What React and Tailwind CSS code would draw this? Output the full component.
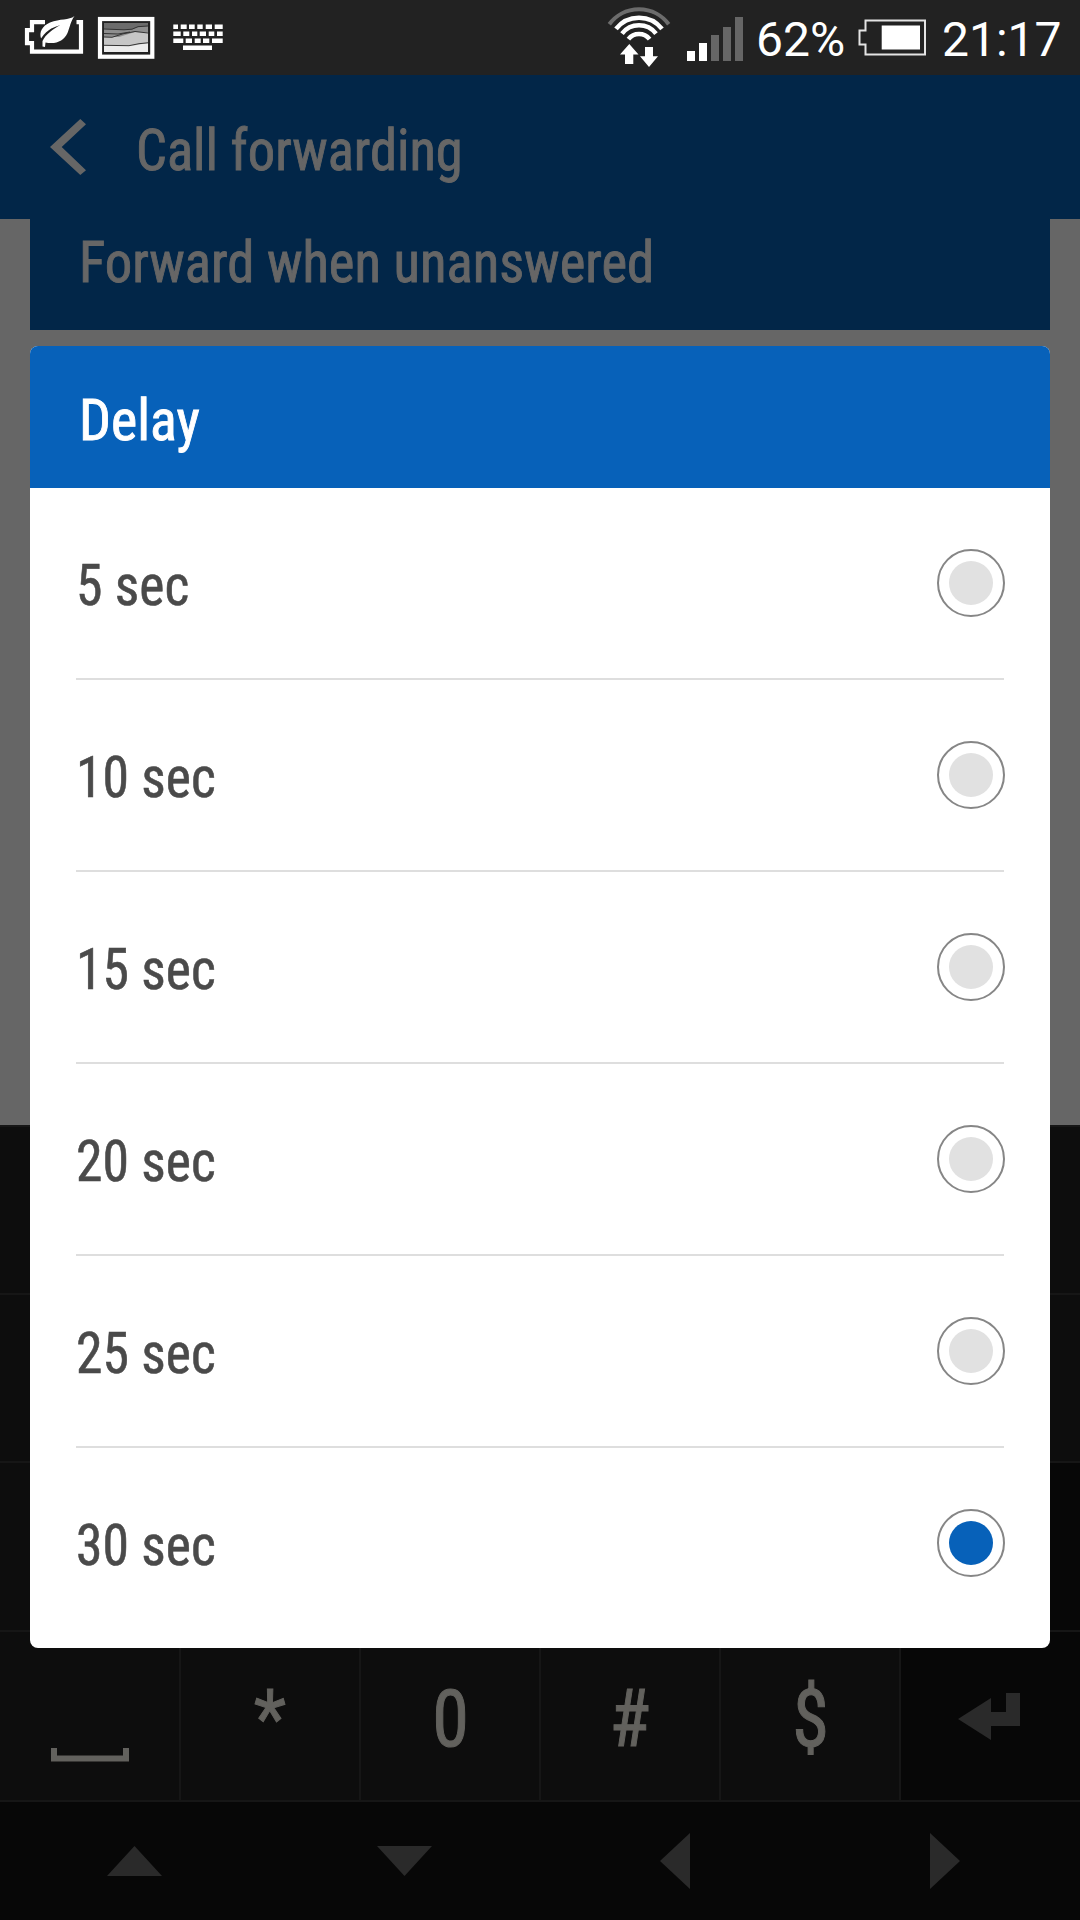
import React, { useState } from 'react';

const DELAYS = [5, 10, 15, 20, 25, 30];

const NotificationIcons = () => (
  <svg width="205" height="50" viewBox="20 14 205 50" className="shrink-0">
    {/* power saver battery with leaf */}
    <path d="M45 23.200H32v8H27v13h5v8.500H81V23.200H76.500" fill="none" stroke="#fff" strokeWidth="4.200" />
    <path
      d="M74.500 17C69 21.500 60 19.500 50 23.500C42 27 39 33 41 39.500C48 29 55 28 60.500 26C53 30 46 35 42.500 42L42.500 47.500L45 48L45.500 43.500C56 45.500 64 42 67.500 34C70 28 70.500 22.500 74.500 17z"
      fill="#fff"
    />
    {/* gallery */}
    <rect x="100" y="20" width="52.300" height="37.700" fill="none" stroke="#fff" strokeWidth="4.200" />
    <rect x="104" y="24" width="44" height="29" fill="#ececec" />
    <path d="M104 24h44v20l-14 2.500-30-.5z" fill="#c6c6c6" />
    <path d="M104 24h44v9.500l-13-.5-16 5h-15z" fill="#8e8e8e" />
    <path d="M104 24h44v3l-10 1-6 2.500-8 .5-20-1z" fill="#6c6c6c" />
    <path
      d="M104 30l20 .8 8-.6 6-2.500 10-.7M104 34.500l14 .5 12-2M104 38l8 .3 11-3.500 12-2.300 13 1.500M104 46.300l25 .4 10-2 9-.9"
      fill="none"
      stroke="#333"
    />
    {/* keyboard */}
    <g fill="none" stroke="#fff" strokeWidth="4.500">
      <path d="M173.300 27.700h4.700M180.700 27.700h6M189 27.700h5.700M197.300 27.700h5.400M205.700 27.700h6.300M214.700 27.700h8" />
      <path d="M173.300 34.800h7.400M183.300 34.800h6M192 34.800h5.300M199.700 34.800h6.300M208.700 34.800h5.600M217 34.800h5.700" />
      <path d="M173.300 41.800h10M185.700 41.800h6.300M194.700 41.800h6M203 41.800h6.300M212 41.800h10.700M183 48.800h29" />
    </g>
  </svg>
);

const SignalIcons = () => (
  <svg width="136" height="66" viewBox="607 6 136 66" className="shrink-0">
    <path d="M609.300 25.200a37 37 0 0 1 59.400 0" fill="none" stroke="#6c6c6c" strokeWidth="4" />
    <path
      d="M616 29.900a29.300 29.300 0 0 1 46 0M622 34.700a21.500 21.500 0 0 1 34 0M628.400 40.100a13.500 13.500 0 0 1 21.200 0"
      fill="none"
      stroke="#fff"
      strokeWidth="4.500"
    />
    <path d="M629.300 45l9.200 10.500h-5.200V65h-8.300V55.500h-5zM649 68l-9-10.700h5V48h8v9.300h5z" fill="#fff" />
    <path d="M687 52h8v10h-8zM699 44h8v18h-8z" fill="#fff" />
    <path d="M711 36h8v26h-8zM723 28h8v34h-8zM735 18h8v44h-8z" fill="#666" />
  </svg>
);

const BatteryIcon = () => (
  <svg width="69" height="38" viewBox="858 19 69 38" className="shrink-0">
    <path d="M865.500 20.500H925V54.500H865.500V44.500H859.500V30.500H865.500z" fill="none" stroke="#e4e4e4" strokeWidth="2" />
    <path d="M881.700 25.500H920V49.500H881.700z" fill="#fff" />
  </svg>
);

const StatusBar = () => (
  <div className="flex h-[75px] items-center bg-[#222] pl-5 font-[Roboto,sans-serif] text-[48px] leading-none text-white">
    <NotificationIcons />
    <div className="ml-[382px] flex items-center">
      <SignalIcons />
      <span className="ml-[13px] w-[90px] whitespace-nowrap pt-1">62%</span>
      <span className="ml-3">
        <BatteryIcon />
      </span>
      <span className="ml-[15px] whitespace-nowrap pt-1">21:17</span>
    </div>
  </div>
);

const Label = ({ children, className = 'scale-x-[0.94]' }) => (
  <span className={`inline-block origin-left whitespace-nowrap text-[58px] leading-none ${className}`}>
    {children}
  </span>
);

const Radio = ({ checked }) => (
  <span className="-mr-px flex h-[68px] w-[68px] items-center justify-center rounded-full border-2 border-[#868686]">
    <span className={`h-11 w-11 rounded-full ${checked ? 'bg-[#0761b9]' : 'bg-[#e1e1e1]'}`} />
  </span>
);

const Key = ({ children, dark = false }) => (
  <div className={`flex items-center justify-center ${dark ? 'bg-[#070707]' : 'bg-[#0d0d0d]'}`}>{children}</div>
);

const KeyText = ({ children }) => (
  <span className="scale-x-[0.94] pt-1.5 text-[79px] leading-none text-[#62615d] [-webkit-text-stroke:1px_#62615d]">
    {children}
  </span>
);

const Arrow = ({ points, box }) => (
  <div className="flex flex-1 items-center justify-center">
    <svg width={box[0]} height={box[1]} className="mr-px fill-[#2a2a2a]">
      <polygon points={points} />
    </svg>
  </div>
);

const Keyboard = () => (
  <div className="flex h-[795px] flex-col bg-[#161616] pt-0.5">
    <div className="h-[166px] bg-[#0d0d0d]" />
    <div className="mt-0.5 h-[166px] bg-[#0d0d0d]" />
    <div className="mt-0.5 grid h-[167px] grid-cols-[899px_179px] gap-0.5">
      <Key />
      <Key dark />
    </div>
    <div className="mt-0.5 grid h-[168px] grid-cols-[179px_178px_178px_178px_178px_179px] gap-0.5">
      <Key>
        <svg width="78" height="14" className="mt-[77px]">
          <path d="M3 0v10.500h72V0" fill="none" stroke="#62615d" strokeWidth="6" />
        </svg>
      </Key>
      <Key><KeyText>*</KeyText></Key>
      <Key><KeyText>0</KeyText></Key>
      <Key><KeyText>#</KeyText></Key>
      <Key><KeyText>$</KeyText></Key>
      <Key dark>
        <svg width="62" height="47" className="mr-1 fill-[#2a2a2a]">
          <path d="M0 26L33 5v14h15V0h14v33H33v14z" />
        </svg>
      </Key>
    </div>
    <div className="mt-0.5 flex h-[118px] bg-[#070707]">
      <Arrow box={[55, 30]} points="0,30 27.5,0 55,30" />
      <Arrow box={[55, 30]} points="0,0 27.5,30 55,0" />
      <Arrow box={[30, 56]} points="30,0 0,28 30,56" />
      <Arrow box={[30, 56]} points="0,0 30,28 0,56" />
    </div>
  </div>
);

const DelayDialog = () => {
  const [selected, setSelected] = useState(30);

  return (
    <div className="absolute top-[346px] left-[30px] h-[1302px] w-[1020px] overflow-hidden rounded-lg bg-white">
      <div className="flex h-[142px] items-center bg-[#0761b9] pt-[5px] pl-[49px] text-white">
        <Label className="scale-x-[0.965] [-webkit-text-stroke:0.9px_white]">Delay</Label>
      </div>
      <div className="px-[46px]">
        {DELAYS.map((sec) => (
          <div
            key={sec}
            onClick={() => setSelected(sec)}
            className="flex h-48 items-center justify-between border-b-2 border-[#dedede] text-[#4a4a4a] last:border-transparent"
          >
            <Label className="scale-x-[0.925] pt-1 [-webkit-text-stroke:0.6px_#4a4a4a]">{sec} sec</Label>
            <Radio checked={sec === selected} />
          </div>
        ))}
      </div>
    </div>
  );
};

export default function App() {
  return (
    <div className="relative flex h-[1920px] w-[1080px] flex-col overflow-hidden bg-[#666] font-['Roboto_Condensed',Roboto,sans-serif] [font-stretch:75%]">
      <div className="[font-stretch:100%]">
        <StatusBar />
      </div>
      <div className="flex h-36 items-center bg-[#022648] pl-[50px] text-[#666]">
        <svg width="36" height="56" viewBox="50 119 36 56" className="fill-[#666]">
          <path d="M80.300 119L86 124.200 61.700 147 86 170.300 80.300 175 50 147z" />
        </svg>
        <Label className="ml-[50px] scale-x-[0.94] pt-[5px] [-webkit-text-stroke:0.9px_#666]">Call forwarding</Label>
      </div>
      <div className="mx-[30px] flex h-[111px] items-start bg-[#022648] pt-3.5 pl-[49px] text-[#666]">
        <Label className="scale-x-[0.943] [-webkit-text-stroke:0.9px_#666]">Forward when unanswered</Label>
      </div>
      <div className="flex-1" />
      <Keyboard />
      <DelayDialog />
    </div>
  );
}
